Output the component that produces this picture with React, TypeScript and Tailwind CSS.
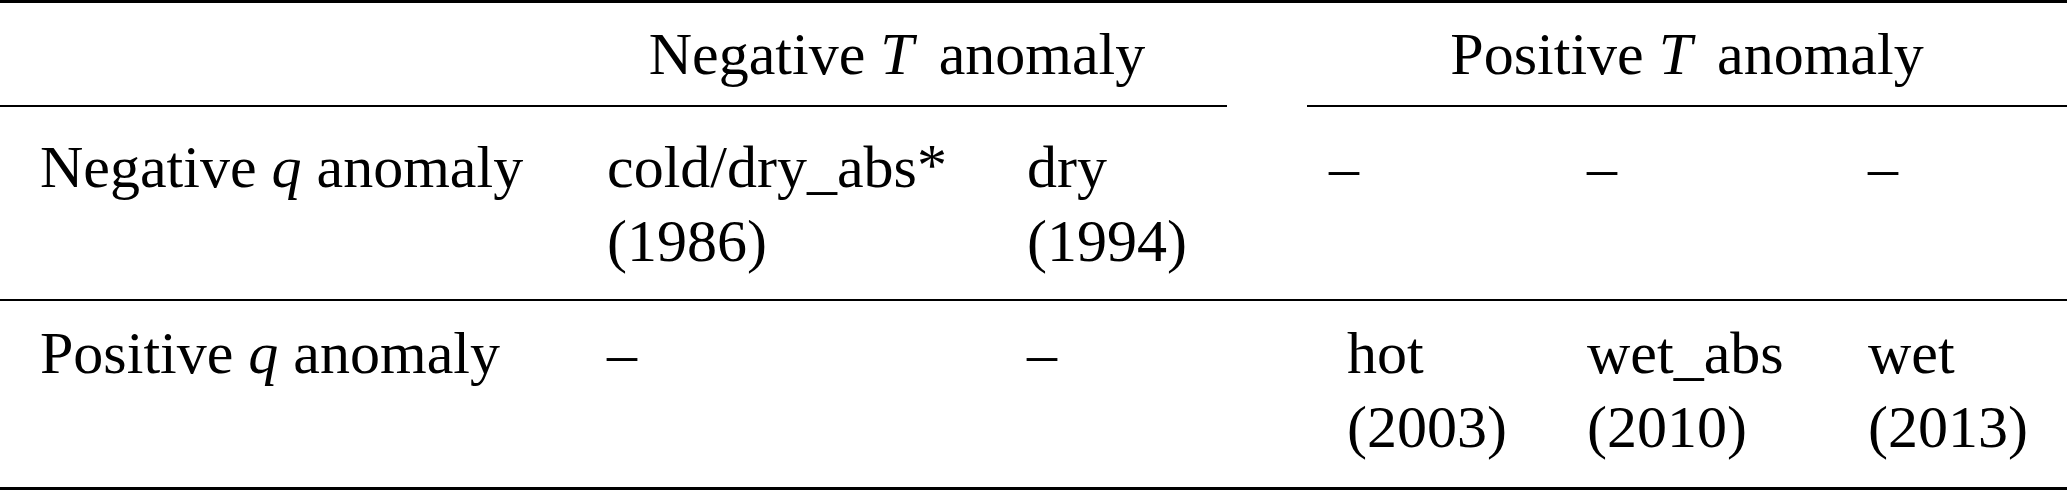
import React from "react";

const cols = "grid grid-cols-[567px_420px_240px_80px_240px_281px_239px]";

function Cell({ children }: { children?: React.ReactNode }) {
  return <div className="px-10 whitespace-nowrap">{children}</div>;
}

export default function App() {
  return (
    <div className="w-[2067px] h-[491px] bg-white text-black font-['Liberation_Serif','Times_New_Roman',serif] text-[60px] leading-[74px]">
      <div className="border-t-[3px] border-black">
        {/* header */}
        <div className="flex pt-[14px] h-[104px]">
          <div className="w-[1227px] flex border-b-2 border-black">
            <div className="w-[567px]" />
            <div className="flex-1 text-center">
              Negative <i>T</i>{" "}
              <span className="ml-[10px]">anomaly</span>
            </div>
          </div>
          <div className="w-[80px]" />
          <div className="flex-1 text-center border-b-2 border-black">
            Positive <i>T</i>{" "}
            <span className="ml-[10px]">anomaly</span>
          </div>
        </div>
        {/* row 1 */}
        <div className={`${cols} pt-[23px] pb-[21px] border-b-2 border-black`}>
          <Cell>
            Negative <i>q</i>&nbsp;anomaly
          </Cell>
          <Cell>
            cold/dry_abs<span className="relative top-[-2px]">*</span>
            <br />
            (1986)
          </Cell>
          <Cell>
            dry
            <br />
            (1994)
          </Cell>
          <div />
          <Cell>
            <span className="relative left-[-18px]">–</span>
          </Cell>
          <Cell>–</Cell>
          <Cell>–</Cell>
        </div>
        {/* row 2 */}
        <div className={`${cols} pt-[15px] pb-[23px] border-b-[3px] border-black`}>
          <Cell>
            Positive <i>q</i>&nbsp;anomaly
          </Cell>
          <Cell>–</Cell>
          <Cell>–</Cell>
          <div />
          <Cell>
            hot
            <br />
            (2003)
          </Cell>
          <Cell>
            wet_abs
            <br />
            (2010)
          </Cell>
          <Cell>
            wet
            <br />
            (2013)
          </Cell>
        </div>
      </div>
    </div>
  );
}
